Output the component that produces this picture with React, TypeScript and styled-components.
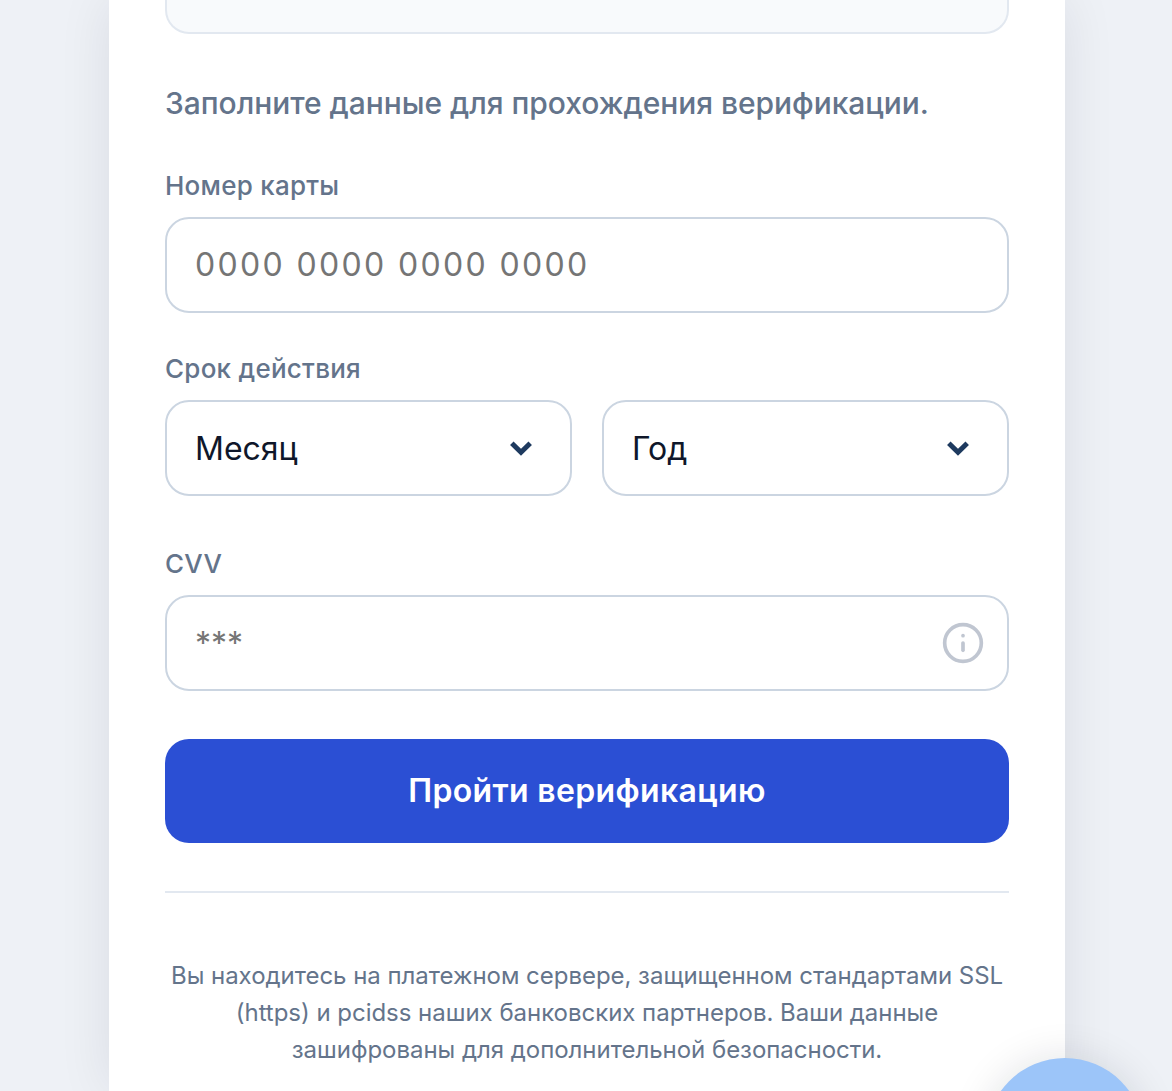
import React, { FC } from 'react';
import styled, { createGlobalStyle } from 'styled-components';
import { Info } from 'lucide-react';

const GlobalStyle = createGlobalStyle`
  html, body {
    margin: 0;
    padding: 0;
    background: #eef1f6;
  }
  * {
    box-sizing: border-box;
  }
`;

const Chevron: FC = () => (
  <svg width="24" height="16" viewBox="0 0 24 16" fill="none">
    <path d="M2.8 3.2L12 12.2L21.2 3.2" stroke="#1e3a5f" strokeWidth="5" strokeLinejoin="miter" />
  </svg>
);

const App: FC = () => {
  return (
    <Page>
      <GlobalStyle />
      <Card>
        <TopBox />
        <Intro>Заполните данные для прохождения верификации.</Intro>
        <CardField>
          <Label>Номер карты</Label>
          <CardInput placeholder="0000 0000 0000 0000" />
        </CardField>
        <ExpiryField>
          <Label>Срок действия</Label>
          <SelectRow>
            <SelectBox>
              Месяц
              <Chevron />
            </SelectBox>
            <SelectBox>
              Год
              <Chevron />
            </SelectBox>
          </SelectRow>
        </ExpiryField>
        <CvvField>
          <Label>CVV</Label>
          <CvvBox>
            <CvvInput placeholder="***" />
            <InfoIcon size={44} strokeWidth={2} />
          </CvvBox>
        </CvvField>
        <SubmitButton>Пройти верификацию</SubmitButton>
        <Divider />
        <Notice>
          Вы находитесь на платежном сервере, защищенном стандартами SSL (https) и pcidss наших банковских партнеров.
          Ваши данные зашифрованы для дополнительной безопасности.
        </Notice>
      </Card>
      <FloatingButton />
    </Page>
  );
};

const Page = styled.div`
  position: relative;
  height: 100vh;
  overflow: hidden;
  padding: 0 107px 0 109px;
  background: #eef1f6;
  font-family: Inter, 'Noto Sans', sans-serif;
`;

const Card = styled.div`
  height: 100%;
  padding: 0 56px;
  background: #fff;
  box-shadow: 0 0 50px 0 rgba(15, 23, 42, 0.09);
`;

const TopBox = styled.div`
  height: 34px;
  background: #f8fafc;
  border: 2px solid #e2e8f0;
  border-top: none;
  border-radius: 0 0 24px 24px;
`;

const Intro = styled.div`
  margin-top: 49px;
  font-size: 30px;
  line-height: 40px;
  font-weight: 500;
  letter-spacing: -0.045px;
  color: #64748b;
`;

const CardField = styled.div`
  margin-top: 48px;
`;

const ExpiryField = styled.div`
  margin-top: 41px;
`;

const CvvField = styled.div`
  margin-top: 53px;
`;

const Label = styled.label`
  display: block;
  margin-bottom: 16px;
  font-size: 26px;
  line-height: 30px;
  font-weight: 500;
  letter-spacing: 0.25px;
  color: #64748b;
`;

const CardInput = styled.input`
  display: block;
  width: 100%;
  height: 96px;
  padding: 0 28px 2px;
  border: 2px solid #cbd5e1;
  border-radius: 24px;
  background: #fff;
  outline: none;
  font-family: inherit;
  font-size: 32px;
  letter-spacing: 2.35px;
  color: #0f172a;
`;

const SelectRow = styled.div`
  display: grid;
  grid-template-columns: 1fr 1fr;
  gap: 30px;
`;

const SelectBox = styled.div`
  display: flex;
  align-items: center;
  justify-content: space-between;
  height: 96px;
  padding: 0 37px 0 28px;
  border: 2px solid #cbd5e1;
  border-radius: 24px;
  font-size: 32px;
  color: #0f172a;
`;

const CvvBox = styled.div`
  display: flex;
  align-items: center;
  height: 96px;
  padding: 0 22px 0 28px;
  border: 2px solid #cbd5e1;
  border-radius: 24px;
`;

const CvvInput = styled.input`
  flex: 1;
  min-width: 0;
  padding: 0;
  border: none;
  outline: none;
  font-family: inherit;
  font-size: 32px;
`;

const InfoIcon = styled(Info)`
  flex: none;
  color: #c0c6d1;
`;

const SubmitButton = styled.button`
  display: block;
  width: 100%;
  height: 104px;
  margin-top: 48px;
  padding: 0 0 2px;
  border: none;
  border-radius: 24px;
  background: #2b4fd4;
  color: #fff;
  font-family: inherit;
  font-size: 32px;
  font-weight: 600;
  letter-spacing: 0.35px;
`;

const Divider = styled.div`
  height: 2px;
  margin-top: 48px;
  background: #e2e8f0;
`;

const Notice = styled.p`
  margin: 64px 0 0;
  font-size: 24px;
  line-height: 37px;
  letter-spacing: -0.03px;
  text-align: center;
  color: #64748b;
`;

const FloatingButton = styled.div`
  position: absolute;
  left: 986px;
  top: 1058px;
  width: 158px;
  height: 158px;
  border-radius: 50%;
  background: #9cc5f9;
  box-shadow: 0 0 40px 0 rgba(15, 23, 42, 0.12);
`;

export default App;
